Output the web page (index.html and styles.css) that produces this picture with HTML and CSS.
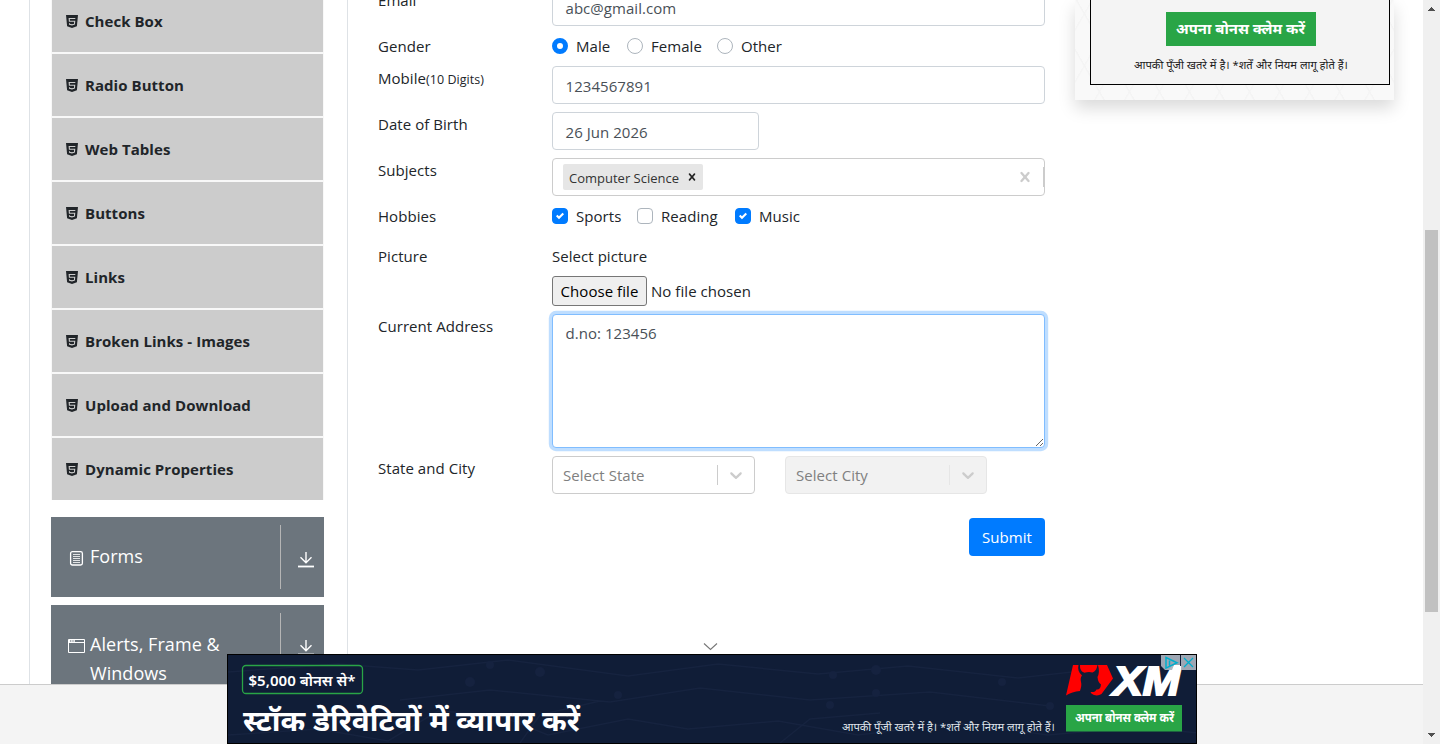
FILE: index.html
```html
<!DOCTYPE html>
<html lang="en">
<head>
<meta charset="utf-8">
<title>Practice Form</title>
<link rel="stylesheet" href="styles.css">
</head>
<body>
<svg class="defs" width="0" height="0">
  <symbol id="html5" viewBox="0 0 12 13"><path fill="#212529" d="M0 0h12l-1.100 11.200L6 13 1.100 11.200z"/><path d="M9.300 3.500H3.200l.2 2.700h5.300l-.3 3-2.400.7-2.400-.7-.1-.9" fill="none" stroke="#ccc" stroke-width="1.100"/></symbol>
  <symbol id="down" viewBox="0 0 16 17"><path d="M8 1v11M2.500 6.300 8 11.800l5.500-5.500" fill="none" stroke="#fff" stroke-width="1.400"/><path d="M0 15.500h16" stroke="#fff" stroke-width="1.800"/></symbol>
  <symbol id="caret" viewBox="0 0 20 20"><path fill="#ccc" d="M4.516 7.548c.436-.446 1.043-.481 1.576 0L10 11.295l3.908-3.747c.533-.481 1.141-.446 1.574 0 .436.445.408 1.197 0 1.615-.406.418-4.695 4.502-4.695 4.502a1.095 1.095 0 0 1-1.576 0S4.924 9.581 4.516 9.163s-.436-1.170 0-1.615z"/></symbol>
  <symbol id="cross" viewBox="0 0 20 20"><path fill="currentColor" d="M14.348 14.849a1.200 1.200 0 0 1-1.697 0L10 11.819l-2.651 3.029a1.200 1.200 0 1 1-1.697-1.697l2.758-3.150-2.759-3.152a1.200 1.200 0 1 1 1.697-1.697L10 8.183l2.651-3.031a1.200 1.200 0 1 1 1.697 1.697l-2.758 3.152 2.758 3.150a1.200 1.200 0 0 1 0 1.698z"/></symbol>
</svg>
<div class="window">
  <div class="page">
    <main class="main">
      <nav class="sidebar">
        <ul class="menu">
          <li class="menu-item"><svg><use href="#html5"/></svg><span>Check Box</span></li>
          <li class="menu-item"><svg><use href="#html5"/></svg><span>Radio Button</span></li>
          <li class="menu-item"><svg><use href="#html5"/></svg><span>Web Tables</span></li>
          <li class="menu-item"><svg><use href="#html5"/></svg><span>Buttons</span></li>
          <li class="menu-item"><svg><use href="#html5"/></svg><span>Links</span></li>
          <li class="menu-item"><svg><use href="#html5"/></svg><span>Broken Links - Images</span></li>
          <li class="menu-item"><svg><use href="#html5"/></svg><span>Upload and Download</span></li>
          <li class="menu-item"><svg><use href="#html5"/></svg><span>Dynamic Properties</span></li>
        </ul>
        <div class="group">
          <div class="group-name">
            <svg width="19" height="16" viewBox="0 0 19 16"><rect x="3.600" y="1.600" width="11.800" height="13.400" rx="1.800" fill="none" stroke="#fff" stroke-width="1.300"/><path d="M6 4.500h7M6 6.500h7M6 8.500h7M6 10.500h7M6 12.500h7" stroke="#fff" stroke-width=".8"/></svg>
            <span>Forms</span>
          </div>
          <div class="group-arrow"><svg width="16" height="17"><use href="#down"/></svg></div>
        </div>
        <div class="group">
          <div class="group-name">
            <svg width="19" height="16" viewBox="0 0 19 16"><path d="M1.500 1.500h16v13h-16zM1.500 4.500h16" fill="none" stroke="#fff"/><path d="M2 3h6" stroke="#fff" stroke-width="2" stroke-dasharray="1.400 .8"/></svg>
            <span>Alerts, Frame &amp; Windows</span>
          </div>
          <div class="group-arrow"><svg width="16" height="17"><use href="#down"/></svg></div>
        </div>
      </nav>
      <form class="form">
        <div class="row"><label>Email</label><div class="control">abc@gmail.com</div></div>
        <div class="row"><label>Gender</label>
          <div class="checks"><i class="radio on"></i><span class="o-male">Male</span><i class="radio"></i><span class="o-female">Female</span><i class="radio"></i><span>Other</span></div></div>
        <div class="row"><label>Mobile<small>(10 Digits)</small></label><div class="control">1234567891</div></div>
        <div class="row"><label>Date of Birth</label><div class="control date">26 Jun 2026</div></div>
        <div class="row"><label>Subjects</label>
          <div class="control multi"><span class="tag"><span>Computer Science</span><svg width="14" height="14"><use href="#cross"/></svg></span><svg class="clear" width="20" height="20"><use href="#cross"/></svg><i class="bar"></i></div></div>
        <div class="row hobbies"><label>Hobbies</label>
          <div class="checks"><i class="box on"><svg viewBox="0 0 8 8"><path fill="#fff" d="M6.564.75l-3.590 3.612-1.538-1.550L0 4.260l2.974 2.990L8 2.193z"/></svg></i><span class="o-sports">Sports</span><i class="box"></i><span class="o-reading">Reading</span><i class="box on"><svg viewBox="0 0 8 8"><path fill="#fff" d="M6.564.75l-3.590 3.612-1.538-1.550L0 4.260l2.974 2.990L8 2.193z"/></svg></i><span>Music</span></div></div>
        <div class="row"><label>Picture</label>
          <div class="picture"><div>Select picture</div><div class="file"><button type="button">Choose file</button><span>No file chosen</span></div></div></div>
        <div class="row"><label>Current Address</label><textarea class="control address">d.no: 123456</textarea></div>
        <div class="row"><label>State and City</label>
          <div class="selects">
            <div class="select"><span>Select State</span><i></i><svg width="20" height="20"><use href="#caret"/></svg></div>
            <div class="select off"><span>Select City</span><i></i><svg width="20" height="20"><use href="#caret"/></svg></div>
          </div></div>
        <button type="button" class="submit">Submit</button>
      </form>
      <aside class="promo">
        <div class="promo-inner">
          <svg width="298" height="84" viewBox="1091 0 298 84" lang="hi">
            <rect x="1166" y="12" width="150" height="34" fill="#29a546"/>
            <text x="1176" y="34" class="hi-bold" font-size="15" textLength="129" lengthAdjust="spacingAndGlyphs">अपना बोनस क्लेम करें</text>
            <text x="1134" y="68.500" class="hi-dark" font-size="11.500" textLength="214" lengthAdjust="spacingAndGlyphs">आपकी पूँजी खतरे में है। *शर्तें और नियम लागू होते हैं।</text>
          </svg>
        </div>
      </aside>
    </main>
    <footer class="footer"></footer>
  </div>
  <div class="scroll">
    <svg width="17" height="17"><path d="M5 11h7v-1h-1v-1h-1v-1h-1v-1h-1v1h-1v1h-1v1h-1z" fill="#505050"/></svg>
    <div class="thumb"></div>
    <svg width="17" height="17"><path d="M5 6h7v1h-1v1h-1v1h-1v1h-1v-1h-1v-1h-1v-1h-1z" fill="#505050"/></svg>
  </div>
</div>
<svg class="collapse" width="16" height="10" viewBox="0 0 16 10"><path d="M2 1.500 8.500 7.500l6.500-6" fill="none" stroke="#777" stroke-width="1.100"/></svg>
<div class="banner" lang="hi">
  <svg width="968" height="88" viewBox="228 655 968 88">
    <g fill="none" stroke="#16233f" stroke-width="1.500">
      <path d="M228 735l90-6 70 12 50-30 60 4 50 20 80-16 60 10 90-8 80 14 100-12 90 12 90-8 60 6M228 672l110-8 80 6 90-10 120 16 90-12 100 10 90-8 110 12 90-10M400 700l90-10 120 12 90-14 110 12 120-8 120 14M520 743l20-28 60-14M780 743l30-24 70-6"/>
    </g>
    <g fill="#15223f"><circle cx="490" cy="665" r="4"/><circle cx="540" cy="672" r="5"/><circle cx="470" cy="682" r="5"/><circle cx="833" cy="675" r="4"/><circle cx="876" cy="670" r="5"/><circle cx="876" cy="693" r="4"/><circle cx="1002" cy="682" r="4"/><circle cx="1050" cy="706" r="4"/><circle cx="830" cy="705" r="4"/><circle cx="618" cy="695" r="4"/></g>
    <rect x="242.500" y="665.500" width="120" height="28" rx="3.500" fill="none" stroke="#29a546" stroke-width="1.300"/>
    <text x="248.500" y="686" class="hi-semi" font-size="14.500" textLength="107" lengthAdjust="spacingAndGlyphs">$5,000 बोनस से*</text>
    <text x="243" y="731" class="hi-bold" font-size="28.500" textLength="337" lengthAdjust="spacingAndGlyphs">स्टॉक डेरिवेटिवों में व्यापार करें</text>
    <text x="842" y="730.500" class="hi-light" font-size="11.500" textLength="213" lengthAdjust="spacingAndGlyphs">आपकी पूँजी खतरे में है। *शर्तें और नियम लागू होते हैं।</text>
    <rect x="1066" y="705" width="116" height="26.500" fill="#29a546"/>
    <text x="1075" y="721.500" class="hi-bold" font-size="12" textLength="99" lengthAdjust="spacingAndGlyphs">अपना बोनस क्लेम करें</text>
    <path fill="#f00" d="M1073 665h5.500q-1.500 6 3.500 10.500-2 2-1 6.500 1 3-1 9-8 .5-14 4.500z"/>
    <path fill="#f00" d="M1080 665h17.500q-1 6-5 7.500-4-1-8 .3-5-1.800-4.500-7.800z"/>
    <path fill="#f00" d="M1098 665h9l6 13.500-11.500 15.500q-3.500 2.300-7.500 1-3-.8-3.500-3 5 .5 6-2.500 4 .5 4.500-5-3-2-3.500-7.500 2.500-4.500.5-12z"/>
    <text x="1113" y="695" class="mark" textLength="67" lengthAdjust="spacingAndGlyphs">XM</text>
    <path fill="#a9b2bd" d="M1161 655h19v15h-15l-4-4zM1181 655h15v15h-15z" fill-opacity=".93"/>
    <path fill="#fff" d="M1174 665h6v5h-8z"/>
    <path d="M1166 657.500l11 5.300-11 5.300zM1169.500 660.500v5" fill="none" stroke="#00aecd" stroke-width="1.500"/>
    <path d="M1184 658l9 9m0-9l-9 9" stroke="#00aecd" stroke-width="1.300"/>
  </svg>
</div>
</body>
</html>
```
FILE: styles.css
```css
* { box-sizing: border-box; }
body { margin: 0; position: relative; height: 744px; overflow: hidden; background: #fff; color: #212529; font: 15px/24px "Open Sans", "Noto Sans", sans-serif; letter-spacing: .05px; }
.defs { position: absolute; }
.window { display: flex; height: 744px; }
.page { flex: 1; display: flex; flex-direction: column; min-width: 0; }
.main { height: 684px; display: flex; align-items: flex-start; padding-left: 29px; overflow: hidden; }
.footer { flex: 1; background: #f4f4f4; border-top: 1px solid #ccc; }

.sidebar { width: 319px; height: 684px; overflow: hidden; border: solid #dee2e6; border-width: 0 1px; padding: 0 23px 0 21px; }
.menu { list-style: none; margin: -10px 0 17px; padding: 0 1px; background: #f8f8f8; display: flex; flex-direction: column; gap: 2px; }
.menu-item { height: 62px; background: #ccc; display: flex; align-items: center; gap: 7px; padding-left: 14px; font-weight: 700; }
.menu-item svg { width: 12px; height: 13px; }
.group { height: 80px; margin-bottom: 8px; background: #6c757d; color: #fff; display: flex; padding: 8px 0; }
.group-name { width: 230px; border-right: 1px solid #b5b5b5; padding: 17px 20px 0 16px; display: flex; gap: 4px; font-size: 18px; line-height: 29px; }
.group-name svg { flex: none; margin-top: 8px; }
.group-arrow { flex: 1; padding: 26px 0 0 17px; }
.group-arrow svg { display: block; }

.form { width: 667px; margin: -12px 30px 0; display: flex; flex-direction: column; gap: 8px; }
.row { display: flex; align-items: flex-start; }
.row > label { width: 174px; flex: none; }
small { font-size: 12.500px; }
.control { width: 493px; height: 38px; border: 1px solid #ced4da; border-radius: 4px; padding: 7px 12px 5px 12.500px; color: #495057; background: #fff; }
.date { width: 207px; }
.checks { display: flex; align-items: center; height: 24px; }
.checks span { margin-left: 8px; }
.radio, .box { width: 16px; height: 16px; border: 1px solid #adb5bd; flex: none; }
.radio { border-radius: 50%; }
.radio.on { border: 5px solid #007bff; }
.box { border-radius: 4px; display: flex; align-items: center; justify-content: center; }
.box.on { background: #007bff; border-color: #007bff; }
.box svg { width: 8px; height: 8px; }
.checks .o-male { width: 51px; }
.checks .o-female { width: 66px; }
.checks .o-sports { width: 61px; }
.checks .o-reading { width: 74px; }
.hobbies { margin-bottom: 8px; }
.multi { display: flex; align-items: center; border-color: #ccc; padding: 0 0 0 10px; }
.tag { height: 26px; width: 140px; background: #e6e6e6; border-radius: 2px; display: flex; align-items: center; justify-content: space-between; padding: 1px 4px 0 6px; font-size: 13px; letter-spacing: 0; color: #333; }
.tag svg { color: #222; margin-top: -2px; }
.clear { margin-left: auto; margin-right: 8px; color: #ccc; }
.bar { width: 1px; height: 20px; background: #ccc; }
.file { display: flex; align-items: center; gap: 4px; height: 30px; margin-top: 8px; }
.file button { width: 95px; height: 30px; border: 1px solid #767676; border-radius: 3px; background: #efefef; font: inherit; letter-spacing: inherit; padding: 0; color: #000; }
.address { display: block; height: 134px; padding-top: 6px; outline: 0; resize: both; border-color: #80bdff; box-shadow: 0 0 0 3.200px #bfdeff; font: inherit; letter-spacing: inherit; }
.selects { display: flex; gap: 30px; }
.select { width: 203px; height: 38px; border: 1px solid #ccc; border-radius: 4px; display: flex; align-items: center; padding: 0 8px 0 10px; color: #808080; }
.select.off { width: 202px; background: #f2f2f2; border-color: #e6e6e6; }
.select i { width: 1px; height: 20px; background: #ccc; margin: 0 8px 0 auto; }
.select.off i { background: #e6e6e6; }
.submit { align-self: flex-end; width: 76px; height: 38px; margin-top: 16px; border: 0; border-radius: 4px; background: #007bff; color: #fff; font: inherit; letter-spacing: inherit; }

.promo { width: 319px; height: 100px; padding: 0 4px 15px 15px; background: repeating-linear-gradient(60deg, transparent 0 24px, #f4f4f4 25px 26px), repeating-linear-gradient(-60deg, #f9f9f9 0 24px, #f5f5f5 25px 26px); box-shadow: 0 8px 16px rgba(0, 0, 0, .15); }
.promo-inner { width: 300px; height: 85px; border: 1px solid #000; border-top: 0; background: #f4f4f4; }
.promo svg, .banner svg { display: block; }
text { font-family: "Noto Sans", "Noto Sans Devanagari", sans-serif; fill: #fff; letter-spacing: 0; }
.hi-bold { font-weight: 700; }
.hi-semi { font-weight: 600; }
.promo .hi-dark { fill: #222; }
.hi-light { fill: #dfe3ea; }
.mark { font: italic 700 41px "Liberation Sans", sans-serif; stroke: #fff; stroke-width: 2; }

.scroll { width: 17px; background: #f0f0f0; display: flex; flex-direction: column; align-items: center; }
.scroll svg { flex: none; }
.thumb { width: 13px; height: 382px; margin: 213px 0 115px; background: #c1c1c1; }
.collapse { position: absolute; left: 702px; top: 642px; }
.banner { position: absolute; left: 227px; top: 654px; width: 970px; height: 90px; border: 1px solid #000; background: #101d37; }
```
